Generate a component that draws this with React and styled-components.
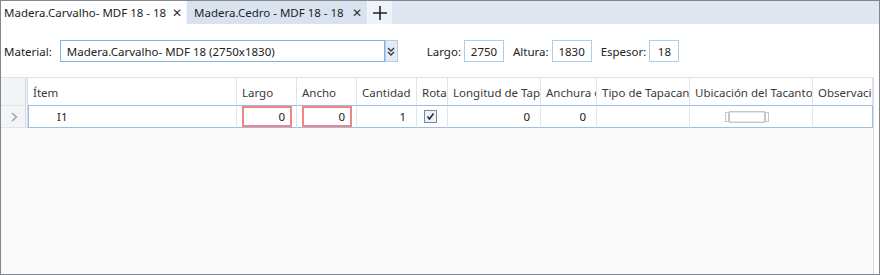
import styled, { createGlobalStyle } from "styled-components";

const Global = createGlobalStyle`
  body {
    margin: 0;
    background: #fff;
    font-family: "Noto Sans", "Open Sans", sans-serif;
    font-size: 11.5px;
    color: #222;
  }
`;

const Frame = styled.div`
  width: 878px;
  height: 273px;
  border: 1px solid #83868c;
  display: flex;
  flex-direction: column;
  background: #fff;
  overflow: hidden;
`;

const TabStrip = styled.div`
  height: 23px;
  display: flex;
  background: #dfe7f3;
`;

const Tab = styled.div`
  display: flex;
  align-items: center;
  gap: 6px;
  padding: 0 5px 0 ${(p) => (p.$active ? 3 : 7)}px;
  width: ${(p) => p.$w}px;
  box-sizing: border-box;
  background: ${(p) => (p.$active ? "#fff" : "#d9e3f0")};
  border-right: 1px solid #f4f7fb;
  white-space: nowrap;
  color: #1e1e1e;
`;

const TabLabel = styled.span`
  flex: 1;
`;

const Close = styled.span`
  font-size: 12px;
  color: #333;
`;

const AddTab = styled.div`
  width: 24px;
  display: flex;
  align-items: center;
  justify-content: center;
  background: #eef3f9;
`;

const Toolbar = styled.div`
  display: flex;
  align-items: center;
  padding: 16px 0 0 3px;
  height: 22px;
`;

const Label = styled.span`
  margin-right: ${(p) => p.$gap || 3}px;
  margin-left: ${(p) => p.$ml || 0}px;
  color: #222;
`;

const Select = styled.div`
  width: 317px;
  height: 20px;
  border: 1px solid #7eb4ea;
  display: flex;
  align-items: center;
  padding-left: 6px;
`;

const DropBtn = styled.div`
  width: 11px;
  height: 20px;
  border: 1px solid #b7cde6;
  background: #e4ebf4;
  display: flex;
  align-items: center;
  justify-content: center;
`;

const NumBox = styled.div`
  width: ${(p) => p.$w}px;
  height: 22px;
  box-sizing: border-box;
  border: 1px solid #a9cfe9;
  display: flex;
  align-items: center;
  justify-content: center;
  margin-right: 9px;
`;

const GridArea = styled.div`
  flex: 1;
  margin-top: 15px;
  width: 872px;
  background: #fafafa;
  border-right: 1px solid #d5dde8;
`;

const cols = "27px 209px 60px 60px 60px 31px 93px 56px 93px 123px 60px";

const HeaderRow = styled.div`
  display: grid;
  grid-template-columns: ${cols};
  height: 27px;
  background: #fff;
  border-top: 1px solid #dfe4ea;
`;

const HeadCell = styled.div`
  display: flex;
  align-items: center;
  padding: 1px 0 0 5px;
  border-right: 1px solid #dfe4ea;
  white-space: nowrap;
  overflow: hidden;
  color: #3a3a3a;
  ${(p) => p.$corner && "background: #f3f4f6; border-right: 3px double #d3dbe4;"}
`;

const DataRow = styled.div`
  display: grid;
  grid-template-columns: ${cols};
  height: 23px;
`;

const RowHead = styled.div`
  display: flex;
  align-items: center;
  padding-left: 10px;
  background: #f3f4f6;
  border-top: 1px solid #dfe4ea;
  border-bottom: 1px solid #dfe4ea;
  border-right: 3px double #d3dbe4;
`;

const Cell = styled.div`
  display: flex;
  align-items: center;
  justify-content: ${(p) => p.$align || "flex-end"};
  padding: 0 ${(p) => p.$pr ?? 10}px 0 ${(p) => p.$pl ?? 0}px;
  background: #fff;
  border-top: 1px solid #9fbde3;
  border-bottom: 1px solid #9fbde3;
  border-right: 1px solid #dce7f3;
  ${(p) => p.$first && "border-left: 1px solid #9fbde3;"}
  ${(p) => p.$last && "border-right: 1px solid #9fbde3;"}
`;

const RedBox = styled.div`
  flex: 1;
  align-self: stretch;
  margin: 0 4px 0 5px;
  box-sizing: border-box;
  border: 2px solid #ef8585;
  display: flex;
  align-items: center;
  justify-content: flex-end;
  padding-right: 5px;
`;

const Check = styled.div`
  width: 11px;
  height: 11px;
  margin-left: -3px;
  border: 1px solid #7b8a99;
  background: #eef2f6;
  display: flex;
  align-items: center;
  justify-content: center;
`;

const EdgeBox = styled.div`
  width: 34px;
  height: 10px;
  margin-left: -8px;
  border: 1px solid #c4c8cc;
  box-shadow: inset 0 1px 0 #e4e6e8, inset 0 -1px 0 #e4e6e8;
  position: relative;
  &::before,
  &::after {
    content: "";
    position: absolute;
    top: 0;
    width: 2px;
    height: 8px;
    border: 1px solid #c4c8cc;
  }
  &::before {
    left: -5px;
  }
  &::after {
    right: -5px;
  }
`;

const headers = [
  "Ítem",
  "Largo",
  "Ancho",
  "Cantidad",
  "Rotar",
  "Longitud de Tapacanto",
  "Anchura de Tapacanto",
  "Tipo de Tapacanto",
  "Ubicación del Tacanto",
  "Observaciones",
];

export default function App() {
  return (
    <>
      <Global />
      <Frame>
        <TabStrip>
          <Tab $active $w={186}>
            <TabLabel>Madera.Carvalho- MDF 18 - 18</TabLabel>
            <Close>✕</Close>
          </Tab>
          <Tab $w={181}>
            <TabLabel>Madera.Cedro - MDF 18 - 18</TabLabel>
            <Close>✕</Close>
          </Tab>
          <AddTab>
            <svg width="14" height="14" viewBox="0 0 14 14">
              <path d="M7 0v14M0 7h14" stroke="#222" strokeWidth="1.6" />
            </svg>
          </AddTab>
        </TabStrip>
        <Toolbar>
          <Label $gap={8}>Material:</Label>
          <Select>Madera.Carvalho- MDF 18 (2750x1830)</Select>
          <DropBtn>
            <svg width="8" height="9" viewBox="0 0 8 9">
              <path d="M1 1l3 3 3-3M1 5l3 3 3-3" fill="none" stroke="#333" strokeWidth="1.3" />
            </svg>
          </DropBtn>
          <Label $ml={29}>Largo:</Label>
          <NumBox $w={40}>2750</NumBox>
          <Label>Altura:</Label>
          <NumBox $w={40}>1830</NumBox>
          <Label>Espesor:</Label>
          <NumBox $w={30}>18</NumBox>
        </Toolbar>
        <GridArea>
          <HeaderRow>
            <HeadCell $corner />
            {headers.map((h) => (
              <HeadCell key={h}>{h}</HeadCell>
            ))}
          </HeaderRow>
          <DataRow>
            <RowHead>
              <svg width="7" height="10" viewBox="0 0 7 10">
                <path d="M1 1l4.5 4L1 9" fill="none" stroke="#8fa0b0" strokeWidth="1.3" />
              </svg>
            </RowHead>
            <Cell $first $align="flex-start" $pl={28}>I1</Cell>
            <Cell $pr={0}>
              <RedBox>0</RedBox>
            </Cell>
            <Cell $pr={0}>
              <RedBox>0</RedBox>
            </Cell>
            <Cell>1</Cell>
            <Cell $align="center" $pr={0}>
              <Check>
                <svg width="9" height="9" viewBox="0 0 9 9">
                  <path d="M1.5 4.5l2 2.5 4-5.5" fill="none" stroke="#1b2a4a" strokeWidth="1.6" />
                </svg>
              </Check>
            </Cell>
            <Cell>0</Cell>
            <Cell>0</Cell>
            <Cell />
            <Cell $align="center" $pr={0}>
              <EdgeBox />
            </Cell>
            <Cell $last />
          </DataRow>
        </GridArea>
      </Frame>
    </>
  );
}
